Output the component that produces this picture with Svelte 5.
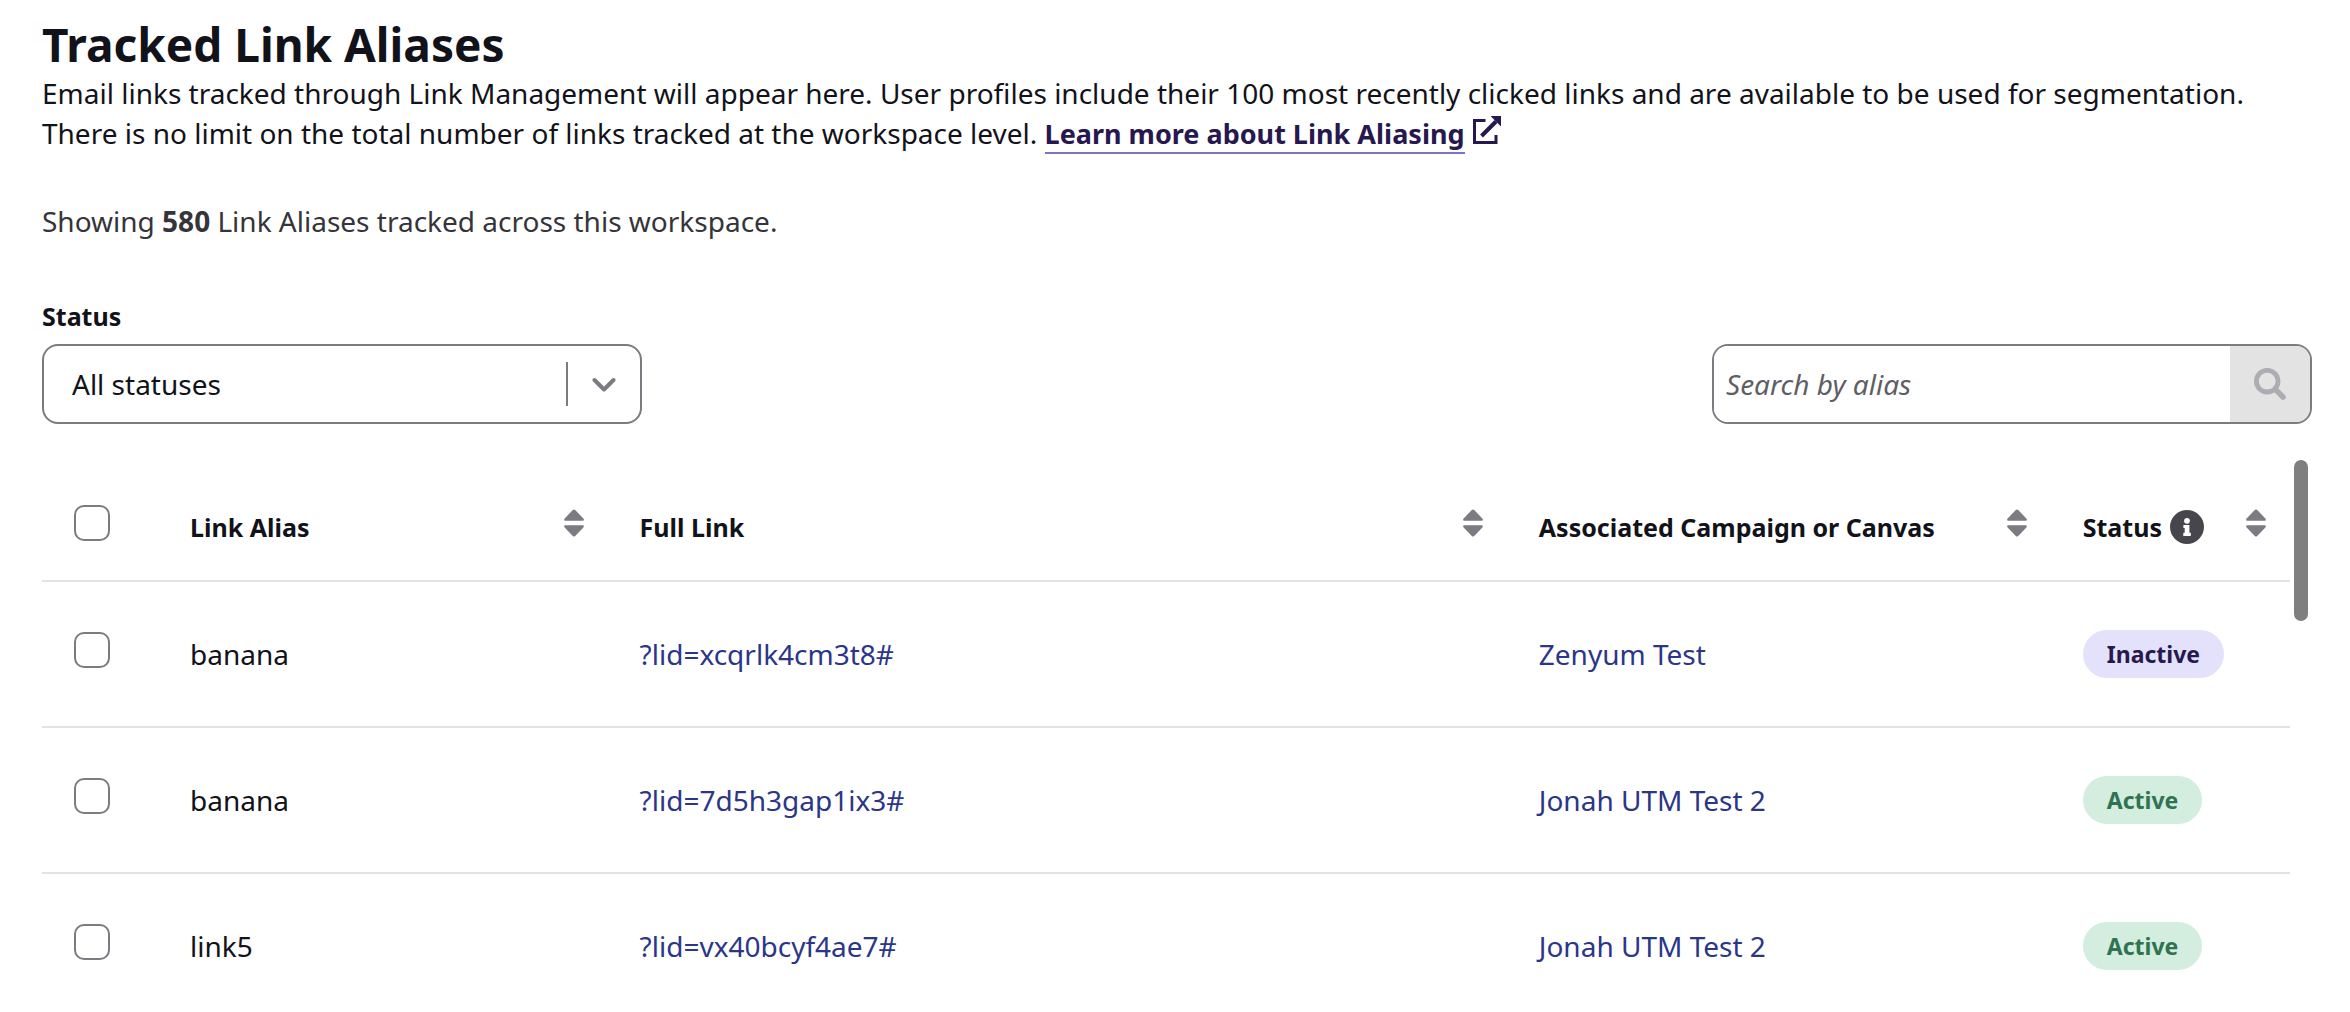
<script lang="ts">
  interface LinkAlias {
    id: number;
    alias: string;
    link: string;
    campaign: string;
    status: "Active" | "Inactive";
  }

  const aliases: LinkAlias[] = [
    { id: 1, alias: "banana", link: "?lid=xcqrlk4cm3t8#", campaign: "Zenyum Test", status: "Inactive" },
    { id: 2, alias: "banana", link: "?lid=7d5h3gap1ix3#", campaign: "Jonah UTM Test 2", status: "Active" },
    { id: 3, alias: "link5", link: "?lid=vx40bcyf4ae7#", campaign: "Jonah UTM Test 2", status: "Active" },
  ];

  const total = 580;

  let statusFilter: string = $state("all");
  let query: string = $state("");
  let selected: number[] = $state([]);

  const rows = $derived(
    aliases.filter(
      (row) =>
        (statusFilter === "all" || row.status === statusFilter) &&
        row.alias.toLowerCase().includes(query.toLowerCase())
    )
  );
  const allSelected = $derived(rows.length > 0 && rows.every((row) => selected.includes(row.id)));

  function toggleAll() {
    selected = allSelected ? [] : rows.map((row) => row.id);
  }
</script>

{#snippet sortButton(label: string)}
  <button class="sort" type="button" aria-label="Sort by {label}">
    <svg viewBox="0 0 20 28" width="20" height="28" aria-hidden="true">
      <path d="M8.8 1.1a1.6 1.6 0 0 1 2.4 0l8.2 8.5c.9.9.4 2.2-.8 2.2H1.4c-1.2 0-1.7-1.3-.8-2.2z" />
      <path d="M8.8 26.9a1.6 1.6 0 0 0 2.4 0l8.2-8.5c.9-.9.4-2.2-.8-2.2H1.4c-1.2 0-1.7 1.3-.8 2.2z" />
    </svg>
  </button>
{/snippet}

<main class="page">
  <h1>Tracked Link Aliases</h1>
  <p>
    Email links tracked through Link Management will appear here. User profiles include their 100
    most recently clicked links and are available to be used for segmentation.<br />
    There is no limit on the total number of links tracked at the workspace level.
    <a class="learn-more" href="#link-aliasing"
      ><span>Learn more about Link Aliasing</span><svg
        viewBox="0 0 28 28"
        width="28"
        height="28"
        aria-hidden="true"
      >
        <path d="M12.5 4.5h-11v22H23V19" fill="none" stroke="currentColor" stroke-width="3" />
        <path d="M8.5 20 23 5.5" fill="none" stroke="currentColor" stroke-width="4" />
        <path d="M17.5 0H28v10.5z" />
      </svg></a
    >
  </p>

  <p class="summary">Showing <strong>{total}</strong> Link Aliases tracked across this workspace.</p>

  <div class="toolbar">
    <div class="filter">
      <label for="status-filter">Status</label>
      <div class="select">
        <select id="status-filter" bind:value={statusFilter}>
          <option value="all">All statuses</option>
          <option value="Active">Active</option>
          <option value="Inactive">Inactive</option>
        </select>
        <svg class="chevron" viewBox="0 0 24 16" width="24" height="16" aria-hidden="true">
          <path d="M2.5 3 12 12.5 21.5 3" />
        </svg>
      </div>
    </div>

    <form class="search" onsubmit={(e) => e.preventDefault()}>
      <input type="text" placeholder="Search by alias" aria-label="Search by alias" bind:value={query} />
      <button type="submit" aria-label="Search">
        <svg viewBox="0 0 32 32" width="32" height="32" aria-hidden="true">
          <circle cx="13.2" cy="13.2" r="10.8" stroke-width="4.8" />
          <path d="m21.5 21.5 7.5 7.5" stroke-width="5.5" />
        </svg>
      </button>
    </form>
  </div>

  <div class="table-area">
    <table>
      <colgroup>
        <col class="col-check" />
        <col class="col-alias" />
        <col class="col-link" />
        <col />
        <col class="col-status" />
      </colgroup>
      <thead>
        <tr>
          <th class="check">
            <input type="checkbox" aria-label="Select all" checked={allSelected} onchange={toggleAll} />
          </th>
          <th><div class="head"><span>Link Alias</span>{@render sortButton("link alias")}</div></th>
          <th><div class="head"><span>Full Link</span>{@render sortButton("full link")}</div></th>
          <th>
            <div class="head">
              <span>Associated Campaign or Canvas</span>{@render sortButton("campaign or canvas")}
            </div>
          </th>
          <th>
            <div class="head">
              <span class="with-info">
                Status
                <svg viewBox="0 0 34 34" width="34" height="34" role="img" aria-label="About status">
                  <circle cx="17" cy="17" r="17" fill="#47464d" />
                  <circle cx="17" cy="10.8" r="2.9" fill="#fff" />
                  <path d="M13.4 14.9h6v7.9h1.4v3.1h-7.5v-3.1h1.4V18h-1.3z" fill="#fff" />
                </svg>
              </span>
              {@render sortButton("status")}
            </div>
          </th>
        </tr>
      </thead>
      <tbody>
        {#each rows as row (row.id)}
          <tr>
            <td class="check">
              <input type="checkbox" aria-label="Select {row.alias}" value={row.id} bind:group={selected} />
            </td>
            <td>{row.alias}</td>
            <td><a href="#link-{row.id}">{row.link}</a></td>
            <td><a href="#campaign-{row.id}">{row.campaign}</a></td>
            <td><span class="pill" class:active={row.status === "Active"}>{row.status}</span></td>
          </tr>
        {/each}
      </tbody>
    </table>
    <div class="scrollbar"></div>
  </div>
</main>

<style>
  :global(body) {
    margin: 0;
    background: #fff;
  }

  .page {
    display: flex;
    flex-direction: column;
    box-sizing: border-box;
    height: 100vh;
    padding: 15px 38px 0 42px;
    overflow: hidden;
    font-family: "Noto Sans", "Open Sans", sans-serif;
    font-size: 28px;
    line-height: 40px;
    color: #12121a;
  }

  h1 {
    margin: 0;
    font-size: 46px;
    line-height: 58px;
    font-weight: 700;
  }

  p {
    margin: 0;
  }

  .learn-more {
    color: #27184f;
    font-size: 27px;
    font-weight: 700;
    text-decoration: none;
  }

  .learn-more span {
    border-bottom: 2px solid #7b74c6;
  }

  .learn-more svg {
    margin-left: 8px;
    fill: currentColor;
  }

  .summary {
    margin-top: 47px;
    color: #35343b;
  }

  .toolbar {
    display: flex;
    justify-content: space-between;
    align-items: flex-end;
    margin-top: 57px;
  }

  .filter label {
    display: block;
    margin-bottom: 10px;
    font-size: 25px;
    line-height: 36px;
    font-weight: 700;
  }

  .select {
    position: relative;
    width: 600px;
  }

  select {
    display: block;
    box-sizing: border-box;
    width: 100%;
    height: 80px;
    padding: 0 96px 0 28px;
    border: 2px solid #7c7b82;
    border-radius: 16px;
    background: #fff;
    appearance: none;
    font: inherit;
    color: inherit;
  }

  .select::after {
    content: "";
    position: absolute;
    top: 18px;
    right: 74px;
    width: 2px;
    height: 44px;
    background: #7c7b82;
    pointer-events: none;
  }

  .chevron {
    position: absolute;
    top: 33px;
    right: 26px;
    fill: none;
    stroke: #7c7b82;
    stroke-width: 4;
    stroke-linecap: round;
    stroke-linejoin: round;
    pointer-events: none;
  }

  .search {
    display: flex;
    box-sizing: border-box;
    width: 600px;
    height: 80px;
    border: 2px solid #7c7b82;
    border-radius: 16px;
    overflow: hidden;
  }

  .search input {
    flex: 1;
    min-width: 0;
    padding: 0 12px;
    border: 0;
    background: #fff;
    font: inherit;
    color: inherit;
  }

  .search input::placeholder {
    color: #5f5e66;
    font-style: italic;
  }

  .search button {
    display: flex;
    align-items: center;
    justify-content: center;
    width: 80px;
    padding: 0;
    border: 0;
    background: #e3e3e3;
  }

  .search svg {
    fill: none;
    stroke: #acacb3;
    stroke-linecap: round;
  }

  .table-area {
    display: flex;
    flex: 1;
    gap: 4px;
    min-height: 0;
    margin-top: 36px;
    padding-right: 4px;
    overflow: hidden;
  }

  table {
    flex: 1;
    align-self: flex-start;
    table-layout: fixed;
    border-collapse: separate;
    border-spacing: 0;
  }

  .col-check {
    width: 108px;
  }

  .col-alias {
    width: 20%;
  }

  .col-link {
    width: 40%;
  }

  .col-status {
    width: 11%;
  }

  th,
  td {
    box-sizing: border-box;
    padding: 0 16px 0 40px;
    border-bottom: 2px solid #e3e3e3;
    text-align: left;
    vertical-align: middle;
  }

  th {
    height: 122px;
    padding-top: 14px;
    font-size: 25px;
    font-weight: 700;
    white-space: nowrap;
  }

  td {
    height: 146px;
  }

  th:last-child {
    padding-right: 24px;
  }

  .check {
    padding-left: 32px;
  }

  td a {
    color: #2b3689;
    text-decoration: none;
  }

  .check input {
    display: block;
    width: 36px;
    height: 36px;
    margin: 0 0 8px;
    border: 2px solid #7c7b82;
    border-radius: 10px;
    background: #fff;
    appearance: none;
  }

  .check input:checked {
    background: #2b3689;
  }

  .head {
    display: flex;
    align-items: center;
    justify-content: space-between;
  }

  .with-info {
    display: flex;
    align-items: center;
    gap: 8px;
  }

  .sort {
    display: flex;
    padding: 0 0 8px;
    border: 0;
    background: none;
  }

  .sort svg {
    fill: #7c7b82;
  }

  .pill {
    display: inline-block;
    padding: 0 24px;
    border-radius: 24px;
    background: #e3e2fa;
    color: #27184f;
    font-size: 23px;
    line-height: 48px;
    font-weight: 700;
  }

  .pill.active {
    background: #d3eddf;
    color: #2f7350;
  }

  .scrollbar {
    width: 14px;
    height: 161px;
    border-radius: 7px;
    background: #7f7f7f;
  }
</style>
